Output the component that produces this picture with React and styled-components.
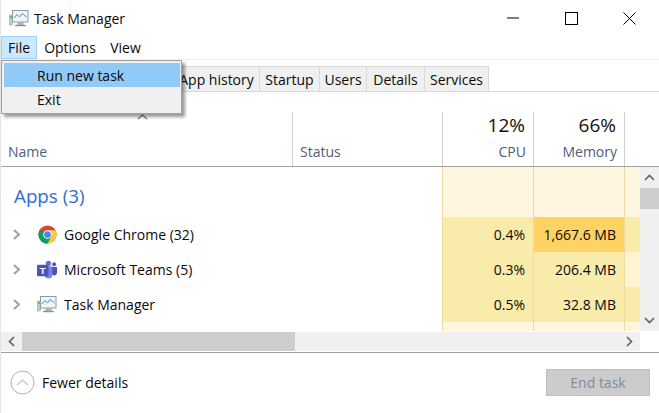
import React from "react";
import styled, { createGlobalStyle } from "styled-components";

const Global = createGlobalStyle`
  html, body { margin: 0; padding: 0; background: #fff; }
  body { font-family: "Open Sans", "Noto Sans", "Liberation Sans", sans-serif; color: #0a0a0a; overflow: hidden; }
`;

const Window = styled.div`
  position: relative;
  width: 659px;
  height: 413px;
  box-sizing: border-box;
  border-left: 1px solid #e4e4e4;
  background: #fff;
  font-size: 14px;
  overflow: hidden;
`;

const TitleBar = styled.div`
  display: flex;
  align-items: center;
  height: 36px;
  padding-left: 8px;
`;

const TitleText = styled.div`
  margin-left: 5px;
  flex: 1;
`;

const WinButton = styled.div`
  width: 58.5px;
  height: 36px;
  display: flex;
  align-items: center;
  justify-content: center;
`;

const MenuBar = styled.div`
  display: flex;
  height: 23px;
  border-bottom: 1px solid #f0f0f0;
`;

const MenuItem = styled.div`
  box-sizing: border-box;
  height: 23px;
  display: flex;
  align-items: center;
  justify-content: center;
  width: ${({ $w }) => $w}px;
  background: ${({ $open }) => ($open ? "#cce8ff" : "transparent")};
  border: 1px solid ${({ $open }) => ($open ? "#99d1ff" : "transparent")};
`;

const Dropdown = styled.div`
  position: absolute;
  left: 0;
  top: 60px;
  width: 181px;
  height: 54px;
  box-sizing: border-box;
  padding: 2px;
  background: #f0f0f0;
  border: 1px solid #a0a0a0;
  box-shadow: 3px 3px 3px rgba(0, 0, 0, 0.4);
  z-index: 5;
`;

const DropItem = styled.div`
  height: 24px;
  width: 176px;
  display: flex;
  align-items: center;
  padding-left: 33px;
  box-sizing: border-box;
  background: ${({ $hot }) => ($hot ? "#91c9f7" : "transparent")};
`;

const TabRow = styled.div`
  display: flex;
  height: 26px;
  margin-top: 6px;
  padding-left: 173px;
  box-sizing: border-box;
  border-bottom: 1px solid #d9d9d9;
`;

const Tab = styled.div`
  box-sizing: border-box;
  width: ${({ $w }) => $w}px;
  height: 25px;
  display: flex;
  align-items: center;
  justify-content: center;
  background: #f0f0f0;
  border: 1px solid #d9d9d9;
  border-left: none;
  border-bottom: none;
`;

const Header = styled.div`
  display: grid;
  grid-template-columns: 291px 150px 91px 91px 1fr;
  height: 55px;
  margin-top: 20px;
  box-sizing: border-box;
  border-bottom: 1px solid #a0a0a0;
  position: relative;
`;

const HeadCell = styled.div`
  box-sizing: border-box;
  border-left: ${({ $first }) => ($first ? "none" : "1px solid #d0d0d0")};
  display: flex;
  flex-direction: column;
  justify-content: flex-end;
  align-items: ${({ $right }) => ($right ? "flex-end" : "flex-start")};
  padding: 0 7px 4px 7px;
  height: 54px;
`;

const HeadPercent = styled.div`
  font-size: 19px;
  line-height: 26px;
  margin-bottom: 4px;
  margin-right: 1px;
  color: #111;
`;

const HeadLabel = styled.div`
  color: #4c607a;
  line-height: 20px;
`;

const SortCaret = styled.svg`
  position: absolute;
  left: 136px;
  top: 2px;
`;

const Body = styled.div`
  display: flex;
  height: 164px;
`;

const Table = styled.div`
  width: 639px;
  display: flex;
  flex-direction: column;
`;

const Row = styled.div`
  display: grid;
  grid-template-columns: 291px 150px 91px 91px 1fr;
  height: ${({ $h }) => $h}px;
`;

const NameCell = styled.div`
  display: flex;
  align-items: center;
  padding: 0 0 1px 12px;
`;

const GroupTitle = styled.div`
  color: #2f6bd8;
  font-size: 18.8px;
  padding: 16px 0 0 13px;
  line-height: 26px;
`;

const Chevron = styled.svg`
  margin-right: 17px;
`;

const AppIcon = styled.div`
  width: 20px;
  height: 20px;
  display: flex;
  align-items: center;
  justify-content: center;
  margin-right: 7px;
`;

const Cell = styled.div`
  box-sizing: border-box;
  border-left: ${({ $lined }) => ($lined ? "1px solid #eed9a0" : "none")};
  background: ${({ $bg }) => $bg || "#fff6e0"};
  display: flex;
  align-items: center;
  justify-content: flex-end;
  padding-right: 8px;
`;

const VScroll = styled.div`
  width: 19px;
  background: #f0f0f0;
  display: flex;
  flex-direction: column;
`;

const ArrowBox = styled.div`
  height: ${({ $h }) => $h}px;
  display: flex;
  align-items: center;
  justify-content: center;
`;

const VThumb = styled.div`
  height: 21px;
  background: #cdcdcd;
`;

const VTrack = styled.div`
  flex: 1;
`;

const HScrollRow = styled.div`
  display: flex;
  height: 19px;
  margin-top: 1px;
`;

const HScroll = styled.div`
  width: 639px;
  background: #f0f0f0;
  display: flex;
  align-items: center;
`;

const HThumb = styled.div`
  width: 273px;
  height: 19px;
  background: #cdcdcd;
`;

const HTrack = styled.div`
  flex: 1;
`;

const HArrow = styled.div`
  width: 21px;
  display: flex;
  align-items: center;
  justify-content: center;
`;

const Footer = styled.div`
  display: flex;
  align-items: center;
  margin-top: 1px;
  height: 60px;
  box-sizing: border-box;
  border-top: 1px solid #a0a0a0;
  padding: 0 9px;
`;

const Fewer = styled.div`
  display: flex;
  align-items: center;
  gap: 7px;
  flex: 1;
`;

const EndTask = styled.div`
  width: 104px;
  height: 27px;
  box-sizing: border-box;
  background: #cccccc;
  border: 1px solid #bfbfbf;
  color: #7d8aa0;
  display: flex;
  align-items: center;
  justify-content: center;
`;

const TaskIcon = () => (
  <svg width="20" height="18" viewBox="0 0 20 18">
    <rect x="0.5" y="6" width="3" height="10" fill="#c8c8c8" stroke="#9a9a9a" strokeWidth="0.5" />
    <rect x="1" y="7" width="2" height="2" fill="#5fc24a" />
    <rect x="3.5" y="1.5" width="15.5" height="11.5" fill="#eef6fc" stroke="#8c9aa6" />
    <path d="M5 9 L8 5.5 L10.5 8 L13 4.5 L17.5 8" fill="none" stroke="#3d8fd6" strokeWidth="1" />
    <path d="M9 13h5l1.5 3h-8z" fill="#b4b4b4" />
    <rect x="6" y="16" width="11" height="1.2" fill="#8f8f8f" />
  </svg>
);

const ChromeIcon = () => (
  <svg width="19" height="19" viewBox="0 0 48 48">
    <circle cx="24" cy="24" r="23" fill="#db4437" />
    <path d="M24 24 L4.1 12.5 A23 23 0 0 0 24 47 L35.5 27z" fill="#0f9d58" />
    <path d="M24 13 H44 A23 23 0 0 1 24 47 L35.5 27z" fill="#ffcd40" />
    <circle cx="24" cy="24" r="11" fill="#fff" />
    <circle cx="24" cy="24" r="8.5" fill="#4285f4" />
  </svg>
);

const TeamsIcon = () => (
  <svg width="21" height="19" viewBox="0 0 21 19">
    <circle cx="12" cy="3" r="2.8" fill="#6b6fc4" />
    <circle cx="18" cy="4" r="2" fill="#4b53bc" />
    <path d="M15 7h6v6a3 3 0 0 1-5 2z" fill="#4b53bc" />
    <path d="M8 6h8v9a4 4 0 0 1-8 0z" fill="#7b83eb" />
    <rect x="0" y="4.5" width="12" height="12" rx="1" fill="#4b53bc" />
    <text x="6" y="14" textAnchor="middle" fontSize="10" fontWeight="700" fontFamily="Liberation Sans, sans-serif" fill="#fff">T</text>
  </svg>
);

const RowChevron = () => (
  <Chevron width="7" height="11" viewBox="0 0 7 11">
    <path d="M1 1l5 4.5L1 10" fill="none" stroke="#a0a0a0" strokeWidth="2" />
  </Chevron>
);

const apps = [
  { name: "Google Chrome (32)", icon: <ChromeIcon />, cpu: "0.4%", mem: "1,667.6 MB", memBg: "#ffd363", restBg: "#f9ecaa" },
  { name: "Microsoft Teams (5)", icon: <TeamsIcon />, cpu: "0.3%", mem: "206.4 MB", memBg: "#f9ecaa", restBg: "#fff4d0" },
  { name: "Task Manager", icon: <TaskIcon />, cpu: "0.5%", mem: "32.8 MB", memBg: "#f9ecaa", restBg: "#f9ecaa" },
];

const tabs = [
  { label: "App history", w: 86 },
  { label: "Startup", w: 60 },
  { label: "Users", w: 47 },
  { label: "Details", w: 58 },
  { label: "Services", w: 64 },
];

export default function App() {
  return (
    <Window>
      <Global />
      <TitleBar>
        <TaskIcon />
        <TitleText>Task Manager</TitleText>
        <WinButton>
          <svg width="12" height="2" viewBox="0 0 12 2"><path d="M0 1h12" stroke="#000" /></svg>
        </WinButton>
        <WinButton>
          <svg width="13" height="13" viewBox="0 0 13 13"><rect x="0.5" y="0.5" width="12" height="12" fill="none" stroke="#000" /></svg>
        </WinButton>
        <WinButton>
          <svg width="13" height="13" viewBox="0 0 13 13"><path d="M0.5 0.5l12 12M12.5 0.5l-12 12" stroke="#000" /></svg>
        </WinButton>
      </TitleBar>
      <MenuBar>
        <MenuItem $w={36} $open>File</MenuItem>
        <MenuItem $w={66}>Options</MenuItem>
        <MenuItem $w={45}>View</MenuItem>
      </MenuBar>
      <Dropdown>
        <DropItem $hot>Run new task</DropItem>
        <DropItem>Exit</DropItem>
      </Dropdown>
      <TabRow>
        {tabs.map((t) => (
          <Tab key={t.label} $w={t.w}>{t.label}</Tab>
        ))}
      </TabRow>
      <Header>
        <SortCaret width="11" height="6" viewBox="0 0 11 6">
          <path d="M1 5l4.5-4L10 5" fill="none" stroke="#7a7a7a" strokeWidth="1.2" />
        </SortCaret>
        <HeadCell $first><HeadLabel>Name</HeadLabel></HeadCell>
        <HeadCell><HeadLabel>Status</HeadLabel></HeadCell>
        <HeadCell $right>
          <HeadPercent>12%</HeadPercent>
          <HeadLabel>CPU</HeadLabel>
        </HeadCell>
        <HeadCell $right>
          <HeadPercent>66%</HeadPercent>
          <HeadLabel>Memory</HeadLabel>
        </HeadCell>
        <HeadCell />
      </Header>
      <Body>
        <Table>
          <Row $h={50}>
            <GroupTitle>Apps (3)</GroupTitle>
            <div />
            <Cell $lined />
            <Cell $lined />
            <Cell $lined />
          </Row>
          {apps.map((a) => (
            <Row key={a.name} $h={35}>
              <NameCell>
                <RowChevron />
                <AppIcon>{a.icon}</AppIcon>
                {a.name}
              </NameCell>
              <div />
              <Cell $lined $bg="#f9ecaa">{a.cpu}</Cell>
              <Cell $lined $bg={a.memBg}>{a.mem}</Cell>
              <Cell $lined $bg={a.restBg} />
            </Row>
          ))}
          <Row $h={9}>
            <div />
            <div />
            <Cell $lined />
            <Cell $lined />
            <Cell $lined />
          </Row>
        </Table>
        <VScroll>
          <ArrowBox $h={21}>
            <svg width="11" height="7" viewBox="0 0 11 7"><path d="M1 6l4.5-4.5L10 6" fill="none" stroke="#606060" strokeWidth="1.6" /></svg>
          </ArrowBox>
          <VThumb />
          <VTrack />
          <ArrowBox $h={21}>
            <svg width="11" height="7" viewBox="0 0 11 7"><path d="M1 1l4.5 4.5L10 1" fill="none" stroke="#606060" strokeWidth="1.6" /></svg>
          </ArrowBox>
        </VScroll>
      </Body>
      <HScrollRow>
        <HScroll>
          <HArrow>
            <svg width="7" height="11" viewBox="0 0 7 11"><path d="M6 1L1.5 5.5 6 10" fill="none" stroke="#606060" strokeWidth="1.6" /></svg>
          </HArrow>
          <HThumb />
          <HTrack />
          <HArrow>
            <svg width="7" height="11" viewBox="0 0 7 11"><path d="M1 1l4.5 4.5L1 10" fill="none" stroke="#606060" strokeWidth="1.6" /></svg>
          </HArrow>
        </HScroll>
      </HScrollRow>
      <Footer>
        <Fewer>
          <svg width="25" height="25" viewBox="0 0 25 25">
            <circle cx="12.5" cy="12.5" r="11.5" fill="none" stroke="#b0b0b0" />
            <path d="M7 15l5.5-5 5.5 5" fill="none" stroke="#c4c4c4" strokeWidth="1.2" />
          </svg>
          Fewer details
        </Fewer>
        <EndTask>End task</EndTask>
      </Footer>
    </Window>
  );
}
